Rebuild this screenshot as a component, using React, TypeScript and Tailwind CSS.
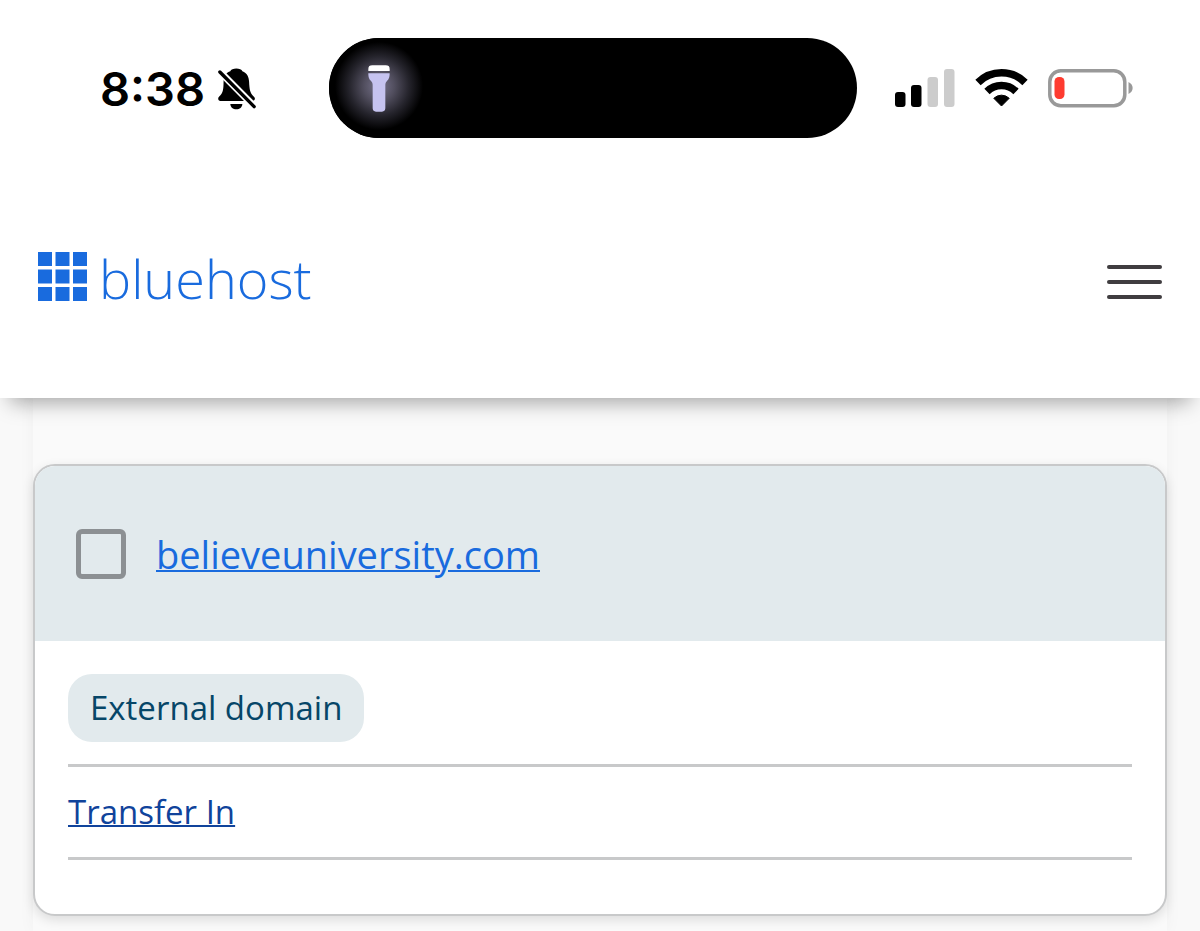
import React from "react";

const BARS = [
  { x: 0, y: 23, height: 15, color: "#000000" },
  { x: 16, y: 16, height: 22, color: "#000000" },
  { x: 32.5, y: 8, height: 30, color: "#cccccc" },
  { x: 49, y: 0, height: 38, color: "#cccccc" },
];

const TILES = [0, 17.5, 35];

const BellOff = () => (
  <svg className="h-[43px] w-10" viewBox="410 52 118 128" aria-hidden="true">
    <path
      d="M420 153C412 153 411 145 416 140C427 130 429 120 429 96C429 78 438 68 449 65C452 54 482 54 485 65C499 70 504 82 505 96C506 119 508 130 518 139C526 146 522 153 514 153Z"
      fill="#000"
    />
    <path d="M449 162H485C484 172 477 178 467 178C457 178 450 172 449 162Z" fill="#000" />
    <path d="M408 56L530 179" stroke="#fff" strokeWidth="21" />
    <path d="M418 67L520 170" stroke="#000" strokeWidth="10" strokeLinecap="round" />
  </svg>
);

const Flashlight = () => (
  <svg className="h-[47px] w-[22px]" viewBox="0 0 66 141" aria-hidden="true">
    <path d="M1 18V12C1 4 5 1 13 1H53C61 1 65 4 65 12V18Z" fill="#fff" />
    <path
      d="M1 25H65C65 38 62 43 57 48C53 52 52 55 52 61V130C52 136 48 140 42 140H24C18 140 14 136 14 130V61C14 55 13 52 9 48C4 43 1 38 1 25Z"
      fill="#c6c3f0"
    />
  </svg>
);

const Signal = () => (
  <svg className="h-[39px] w-[60px]" viewBox="0 0 60 39" aria-hidden="true">
    {BARS.map((bar) => (
      <rect key={bar.x} x={bar.x} y={bar.y} width="10.5" height={bar.height} rx="3" fill={bar.color} />
    ))}
  </svg>
);

const Wifi = () => (
  <svg className="h-[39px] w-[53px]" viewBox="0 0 53 39" aria-hidden="true">
    <g fill="none" stroke="#000" strokeWidth="7.5">
      <path d="M3 13.5A33.3 33.3 0 0 1 50 13.5" />
      <path d="M12 22.5A20.6 20.6 0 0 1 41 22.5" />
    </g>
    <path d="M26.5 37L18.8 29.3A11 11 0 0 1 34.2 29.3Z" fill="#000" stroke="#000" strokeLinejoin="round" />
  </svg>
);

const Battery = () => (
  <svg className="h-[39px] w-[86px]" viewBox="0 0 86 39" aria-hidden="true">
    <rect x="1.8" y="1.8" width="75" height="35" rx="11" fill="none" stroke="#999" strokeWidth="3.5" />
    <rect x="6.5" y="8" width="10" height="22" rx="4.5" fill="#fe3b30" />
    <path d="M80.5 13C86 15.5 86 22.5 80.5 25Z" fill="#999" />
  </svg>
);

const StatusBar = () => {
  return (
    <div className="grid grid-cols-[1fr_44.5%_1fr] items-center pt-[38px] pr-[14px]">
      <div className="flex items-center justify-center gap-3 pl-7">
        <span className="pt-0.5 font-['Inter',sans-serif] text-[47px] leading-[48px] font-semibold">8:38</span>
        <BellOff />
      </div>
      <div className="flex h-[100px] overflow-hidden rounded-full bg-black">
        <div className="flex w-[100px] items-center justify-center bg-[radial-gradient(circle_44px_at_50%_48%,#77738c_0%,#514e5e_35%,#25242c_68%,#000_100%)]">
          <Flashlight />
        </div>
      </div>
      <div className="flex items-center gap-5 pl-[38px]">
        <Signal />
        <Wifi />
        <Battery />
      </div>
    </div>
  );
};

const Logo = () => (
  <a href="#" className="flex items-center gap-3 text-[#196bde]">
    <svg className="size-[49px]" viewBox="0 0 49 49" aria-hidden="true">
      {TILES.map((y) =>
        TILES.map((x) => <rect key={`${x}-${y}`} x={x} y={y} width="14" height="14" fill="currentColor" />)
      )}
    </svg>
    <span className="pt-1 font-['Open_Sans',sans-serif] text-[54px] leading-[52px] font-[330]">bluehost</span>
  </a>
);

const App = () => {
  return (
    <div className="flex min-h-screen flex-col bg-[#f9f9f9] font-['Open_Sans',sans-serif]">
      <header className="relative z-10 bg-white shadow-[0_14px_20px_-10px_rgba(0,0,0,0.36)]">
        <StatusBar />
        <nav className="flex items-center justify-between px-[38px] pt-[110px] pb-[94px]">
          <Logo />
          <button type="button" aria-label="Menu" className="flex w-[55px] flex-col gap-[11px] pt-3">
            <span className="h-1 w-full rounded-full bg-[#403d40]" />
            <span className="h-1 w-full rounded-full bg-[#403d40]" />
            <span className="h-1 w-full rounded-full bg-[#403d40]" />
          </button>
        </nav>
      </header>

      <main className="mx-[33px] grow bg-[#fafafa] pt-[66px] pb-4 shadow-[0_0_16px_rgba(0,0,0,0.04)]">
        <section className="overflow-hidden rounded-[22px] border-2 border-[#c8c9ca] bg-white shadow-[0_4px_12px_rgba(0,0,0,0.12)]">
          <div className="flex h-[175px] items-center gap-[30px] bg-[#e2eaed] px-[41px]">
            <input
              id="domain"
              type="checkbox"
              aria-label="Select believeuniversity.com"
              className="size-[50px] appearance-none rounded-md border-[5px] border-[#8c9093]"
            />
            <a href="#" className="text-[38px] leading-[50px] text-[#196bde] underline decoration-2">
              believeuniversity.com
            </a>
          </div>
          <div className="px-[33px] pt-[33px] pb-[54px]">
            <div className="border-b-[3px] border-[#c8c9ca] pb-[22px]">
              <span className="inline-block rounded-[24px] bg-[#e2eaed] px-[22px] align-top text-[33px] leading-[68px] text-[#064668]">
                External domain
              </span>
            </div>
            <div className="border-b-[3px] border-[#c8c9ca] py-[22px]">
              <a href="#" className="block w-fit text-[33px] leading-[46px] text-[#10439b] underline decoration-2">
                Transfer In
              </a>
            </div>
          </div>
        </section>
      </main>
    </div>
  );
};

export default App;
